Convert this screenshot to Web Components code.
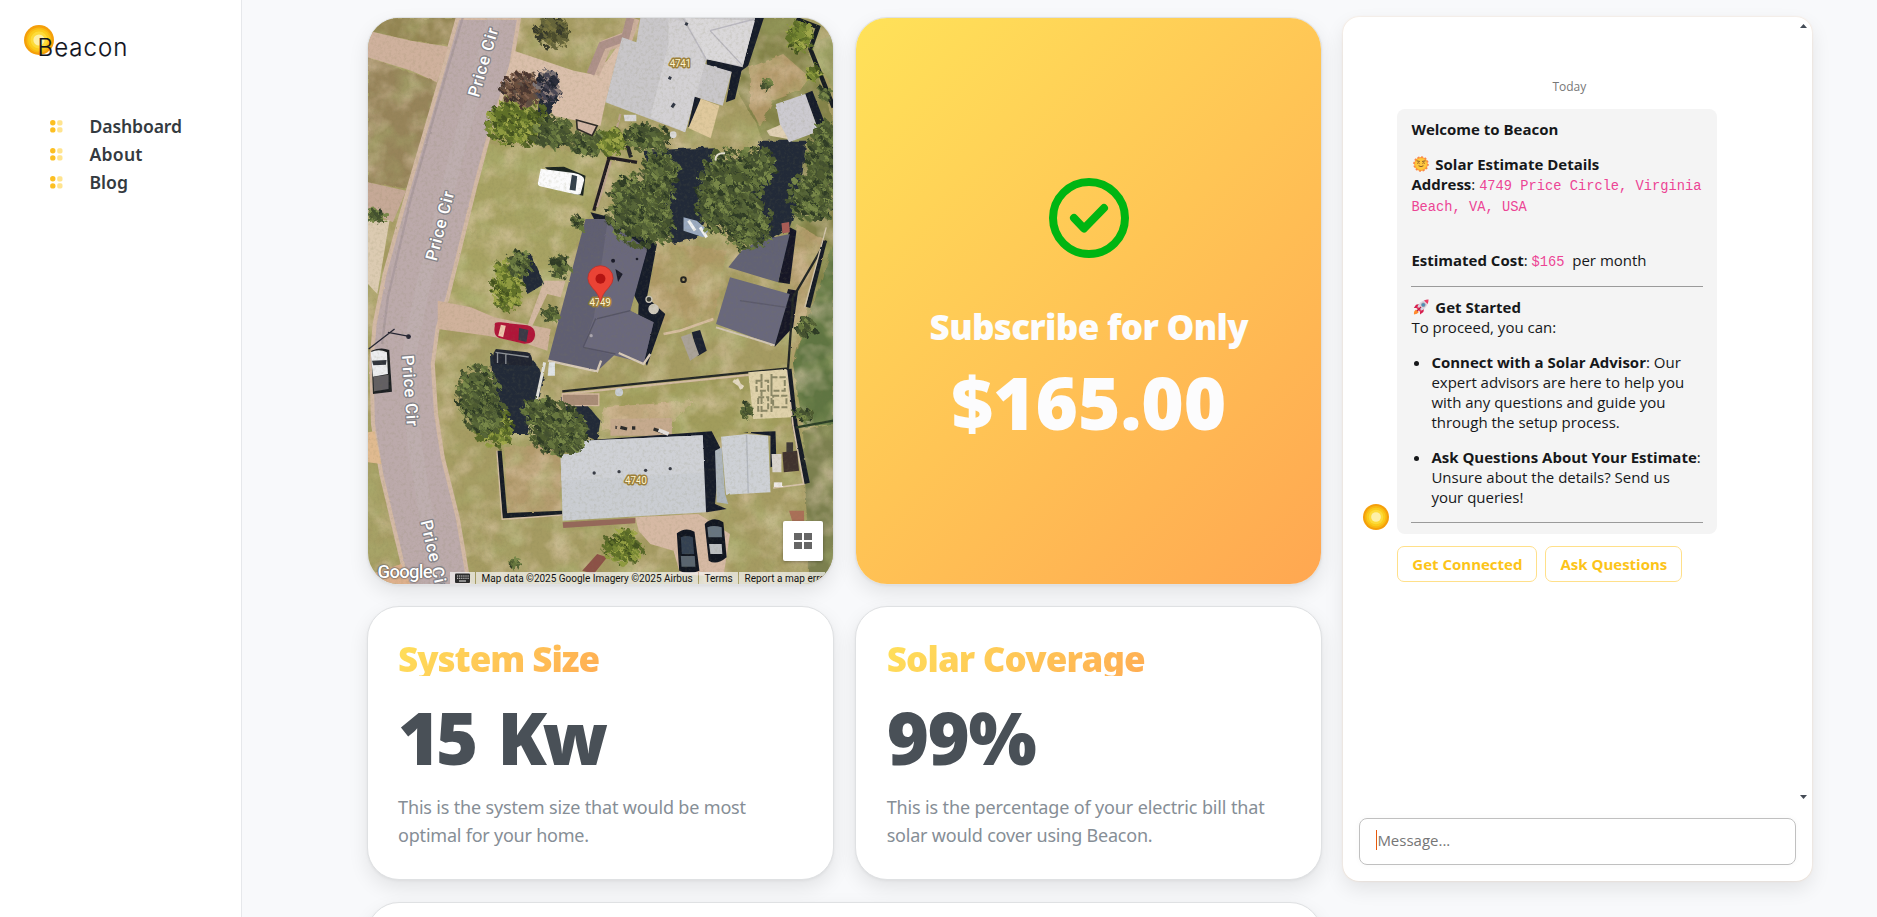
<!DOCTYPE html>
<html lang="en">
<head>
<meta charset="utf-8">
<title>Beacon</title>
<style>
html,body{margin:0;height:100%;overflow:hidden}
body{background:#f8f9fb;font-family:"Open Sans","Noto Sans",sans-serif}
</style>
</head>
<body>
<beacon-app></beacon-app>
<script>
function define(name, html, setup){
  customElements.define(name, class extends HTMLElement{
    constructor(){
      super();
      const t=document.createElement('template');
      t.innerHTML=html;
      this.attachShadow({mode:'open'}).append(t.content.cloneNode(true));
    }
    connectedCallback(){ if(setup) setup(this,this.shadowRoot); }
  });
}

/* Text tracked so that it fills the given width */
define('tracked-text', `<style>:host{display:inline-block;white-space:nowrap}span{display:inline-block}</style><span><slot></slot></span>`,
(el,root)=>{
  const s=root.querySelector('span'), n=el.textContent.length;
  const w=s.getBoundingClientRect().width;
  el.style.letterSpacing=((+el.getAttribute('width')-w)/(n-1)).toFixed(3)+'px';
});

define('sun-disc', `<style>:host{display:block}svg{display:block;width:100%;height:100%}</style>
<svg viewBox="0 0 30 30"><circle cx="15" cy="15" r="15" fill="#f59f0a"/><circle cx="15" cy="15" r="12.6" fill="#f8b912"/><circle cx="15" cy="15" r="10.8" fill="#fbcb1c"/><circle cx="15" cy="15" r="8.4" fill="#fddb3a"/><circle cx="15" cy="15" r="5.6" fill="#fdf0a8"/></svg>`);

define('brand-logo', `<style>
:host{display:grid;width:106px;height:34px}
sun-disc{width:30px;height:30px;grid-area:1/1}
tracked-text{grid-area:1/1;margin:6.5px 0 -6px 13.5px;font:300 24px/32px Inter,sans-serif;color:#10131c;-webkit-text-stroke:.2px #10131c}
</style><sun-disc></sun-disc><tracked-text width="90">Beacon</tracked-text>`);

define('nav-item', `<style>
:host{display:flex;align-items:center;height:28px;color:#343a40;font:600 17.6px/28px "Noto Sans",sans-serif}
svg{width:13px;height:13px;margin-right:26.5px}
</style>
<svg viewBox="0 0 13 13"><circle cx="2.8" cy="2.8" r="2.7" fill="#fcbf22"/><circle cx="2.8" cy="9.9" r="2.7" fill="#fcbf22"/><rect x="7.2" y=".3" width="5.3" height="5.2" rx="1.7" fill="#ffe48f"/><rect x="7.2" y="7.3" width="5.3" height="5.2" rx="1.7" fill="#ffe48f"/></svg>
<slot></slot>`);

define('side-bar', `<style>
:host{display:block;box-sizing:border-box;width:242px;height:100%;background:#fff;border-right:1px solid #e6e8eb;padding:25px 0 0 24px}
nav{padding:53px 0 0 26px}
</style><brand-logo></brand-logo>
<nav><nav-item><tracked-text width="92.5">Dashboard</tracked-text></nav-item><nav-item><tracked-text width="53">About</tracked-text></nav-item><nav-item><tracked-text width="38.5">Blog</tracked-text></nav-item></nav>`);

define('dash-card', `<style>
:host{display:block;box-sizing:border-box;border:1px solid #dfe1e3;border-radius:32px;background:#fff;box-shadow:0 8px 20px rgba(0,0,0,.09),0 1px 3px rgba(0,0,0,.05);min-width:0;overflow:hidden}
</style><slot></slot>`);

define('stat-body', `<style>
:host{display:flex;flex-direction:column;align-items:flex-start;padding:33.5px 30.5px}
.t{font:900 35px/35px "Noto Sans",sans-serif;background:linear-gradient(135deg,#ffe05a,#ffad53);-webkit-background-clip:text;background-clip:text;color:transparent}
.v{margin-top:25px;font:900 72px/72px "Noto Sans",sans-serif;color:#495057}
.d{margin-top:20px;font:400 18px/28px "Noto Sans",sans-serif;color:#868e96;display:flex;flex-direction:column;align-items:flex-start}
::slotted(tracked-text){display:block}
</style><div class="t"><slot name="title"></slot></div><div class="v"><slot name="value"></slot></div><div class="d"><slot></slot></div>`);

define('subscribe-body', `<style>
:host{display:flex;flex-direction:column;align-items:center;height:100%;box-sizing:border-box;padding-top:159.5px;background:linear-gradient(135deg,#ffe259,#ffa751);color:#fcfcfd;font:900 35px/35px "Noto Sans",sans-serif}
svg{width:80px;height:80px}
.t{margin-top:51px}
.p{margin-top:22px;font-size:72.5px;line-height:72px}
</style>
<svg viewBox="0 0 80 80" fill="none" stroke="#00b512" stroke-width="8"><circle cx="40" cy="40" r="36"/><path d="M25 40l10 10.5 20-20.5" stroke-linecap="round" stroke-linejoin="round"/></svg>
<div class="t"><tracked-text width="319">Subscribe for Only</tracked-text></div>
<div class="p"><tracked-text width="275">$165.00</tracked-text></div>`);

/* Aerial view. One unit is a third of a pixel. */
define('aerial-map', `<style>
:host{display:grid;width:100%;height:568px;position:relative}
.scene{grid-area:1/1;width:100%;height:568px;display:block}
.btn{position:absolute;right:10px;bottom:25px;width:40px;height:40px;background:#fff;border-radius:2px;box-shadow:0 1px 3px rgba(0,0,0,.3);display:grid;place-items:center}
.g{position:absolute;left:10px;bottom:2px;font:500 18.5px/24px Roboto,sans-serif;color:#fff;text-shadow:0 0 2px #555,0 0 1px #555,0 0 2px #666}
.bar{position:absolute;left:82px;right:0;bottom:0;height:14px;display:flex;overflow:hidden;font:400 10px/14px Roboto,sans-serif;color:#111}
.bar>span{box-sizing:border-box;background:rgba(245,245,245,.72);padding:0 5.5px;margin-right:1px;white-space:nowrap;flex:none}
.bar svg{display:block;margin-top:1px}
</style>
<svg class="scene" viewBox="20 22 1402 1704" preserveAspectRatio="none">
<defs>
<filter id="grain" x="0" y="0" width="100%" height="100%"><feTurbulence type="fractalNoise" baseFrequency=".11" numOctaves="4" seed="4"/><feColorMatrix values="0 0 0 0 .2  0 0 0 0 .2  0 0 0 0 .08  1.6 0 0 0 -.72"/></filter>
<filter id="patch" x="0" y="0" width="100%" height="100%"><feTurbulence type="fractalNoise" baseFrequency=".014" numOctaves="3" seed="9"/><feColorMatrix values="0 0 0 0 .84  0 0 0 0 .67  0 0 0 0 .5  0 2.4 0 0 -1.02"/></filter>
<filter id="green" x="0" y="0" width="100%" height="100%"><feTurbulence type="fractalNoise" baseFrequency=".012" numOctaves="3" seed="31"/><feColorMatrix values="0 0 0 0 .42  0 0 0 0 .48  0 0 0 0 .18  0 2.2 0 0 -.95"/></filter>
<filter id="rough" x="-10%" y="-10%" width="120%" height="120%"><feTurbulence type="fractalNoise" baseFrequency=".05" numOctaves="2" seed="2" result="n"/><feDisplacementMap in="SourceGraphic" in2="n" scale="16"/></filter>
<filter id="leaf" x="-5%" y="-5%" width="110%" height="110%" color-interpolation-filters="sRGB"><feTurbulence type="fractalNoise" baseFrequency=".07" numOctaves="2" seed="6" result="n"/><feDisplacementMap in="SourceGraphic" in2="n" scale="24"/><feGaussianBlur stdDeviation="1.5"/></filter>
<filter id="edge"><feTurbulence type="fractalNoise" baseFrequency=".05" numOctaves="2" seed="5" result="n"/><feDisplacementMap in="SourceGraphic" in2="n" scale="5"/></filter>
</defs>
<rect x="20" y="22" width="1402" height="1704" fill="#a59b62"/>
<g filter="url(#rough)">
<path d="M20 140L230 215 140 535 20 515Z" fill="#97845a"/>
<path d="M20 22H290L262 105 150 90 20 60Z" fill="#948653"/>
<path d="M1180 22H1310L1422 330V870L1300 1060 1290 640 1190 340 1130 240Z" fill="#848348"/>
<path d="M1170 170L1270 130 1350 200 1320 240 1240 270 1200 350 1170 290Z" fill="#b09666"/>
<path d="M1350 100L1422 70V240Z" fill="#989a5f"/>
<path d="M1300 1060L1422 700V1240L1330 1250Z" fill="#5f7442"/>
<path d="M1330 1260L1422 1240V1726H1350Z" fill="#7c804f"/>
<path d="M380 400L740 430 690 610 620 770 560 850 380 900 260 860 350 520Z" fill="#a7a264"/>
<path d="M890 690L1100 720 1060 930 910 960 870 850Z" fill="#ae9965"/>
<path d="M620 1150L1270 1090 1290 1240 1050 1290 760 1240 700 1280Z" fill="#a19c5b"/>
<path d="M730 1190L1000 1170 930 1240 720 1260Z" fill="#c0a77e"/>
<path d="M430 1310L600 1290V1500L440 1510Z" fill="#b29a6c"/>
<path d="M1310 640L1400 690 1300 1060 1260 830Z" fill="#b09967"/>
</g>
<rect x="20" y="22" width="1402" height="1704" filter="url(#patch)" opacity=".5"/>
<rect x="20" y="22" width="1402" height="1704" filter="url(#green)" opacity=".5"/>
<g filter="url(#edge)">
<path d="M290 22H475L450 170 380 390 345 520 260 860 230 950 215 1060 225 1210 245 1340 290 1520 325 1726H140L110 1600 60 1390 35 1240 30 1060 40 940 70 790 140 540 225 250Z" fill="#bcaaab" stroke="#d3b9a5" stroke-width="12"/>
<path d="M305 22L235 260 150 560 80 860 62 1000" stroke="#a5969a" stroke-width="7" fill="none" opacity=".7"/>
<path d="M400 22L290 420 180 850 140 1050 160 1300 230 1726" stroke="#c4b7b7" stroke-width="42" fill="none" opacity=".35"/>
<path d="M20 60L150 90 262 108 228 215 150 180 20 140Z" fill="#cfb19d"/>
<path d="M20 515L135 540 95 635 20 600Z" fill="#c6a997"/><path d="M20 630L85 628 48 850 20 820Z" fill="#dccbb2"/>
<path d="M20 1265L40 1262 60 1360 20 1355Z" fill="#e0ba90"/><path d="M30 1690L120 1660 150 1726H50Z" fill="#deb08c"/>
<path d="M460 120L640 180 690 190 740 150 785 85 735 275 720 345 580 315 540 250 430 210Z" fill="#dabfab"/>
<path d="M820 22L800 80 735 105 700 190" stroke="#cdb09d" stroke-width="36" fill="none"/>
<path d="M810 22L795 80 725 105 690 190" stroke="#ae918a" stroke-width="24" fill="none"/>
<path d="M230 870L330 890 400 920 520 945 570 955 560 1020 500 1000 380 975 230 955Z" fill="#d0b29c"/>
<path d="M550 810L615 810 600 860 560 850 515 945H500Z" fill="#d3b8a2"/>
<path d="M825 1520L1015 1510 1110 1570 1090 1700 960 1690 940 1620 870 1600 835 1560Z" fill="#d6b9a4"/>
<path d="M665 1680L710 1630 740 1640 700 1690Z" fill="#8c5146"/>
<path d="M1288 1500H1333V1545L1300 1540Z" fill="#aa6f58"/>
<path d="M750 1225L935 1222V1275H750Z" fill="#c6aa8e"/>
</g>
<g filter="url(#rough)" fill="#232b38">
<path d="M540 190L600 240 570 300 560 370 530 330Z"/>
<path d="M390 1030L520 1050 550 1100 530 1170 500 1270 440 1270 400 1200Z"/>
<path d="M600 1160L660 1160 720 1230 710 1290 640 1260Z"/>
<path d="M850 420L1060 410 1060 560 1010 680 940 700 880 560Z"/>
<path d="M1200 390L1340 390 1320 560 1290 650 1190 720 1150 640Z"/>
<path d="M460 730L510 730 550 820 500 850Z"/>
<path d="M770 1580L810 1620 795 1640 770 1600Z"/>
</g>
<g filter="url(#edge)">
<path d="M1185 22H1212L1165 165 1145 180 1125 265 1098 275 1115 185 1040 162V142L1148 168Z" fill="#171c2c"/>
<path d="M840 22H1185L1148 170 1040 146 1035 160 1115 183 1088 285 1004 258 975 365 735 275 785 80 828 95Z" fill="#c9c7ca"/>
<path d="M925 22L1000 40 1035 160 975 365 870 318 925 100Z" fill="#d3d1d4"/><path d="M975 22L1185 30 1148 165 1040 146Z" fill="#dad8da"/>
<path d="M970 25L1038 145M1050 60L1185 25M1050 60L1148 165" stroke="#b9b7bf" stroke-width="4" fill="none"/>
<path d="M1004 258L1022 264 1000 354 984 348Z" fill="#151a2a"/><path d="M1022 264L1078 285 1052 383 985 352Z" fill="#e0c99d"/>
<path d="M975 38l8 4M925 200l8 4M935 290l8-12" stroke="#333844" stroke-width="9"/>
<path d="M1335 250L1358 240 1395 335 1375 355Z" fill="#171c2c"/><path d="M1248 280L1337 250 1377 362 1288 395 1262 350Z" fill="#cccad0"/><path d="M1220 360L1262 342 1285 385 1230 375Z" fill="#e0d0b4"/>
<path d="M1310 25L1375 50 1352 115 1422 290" stroke="#141c24" stroke-width="13" fill="none"/>
<path d="M740 440L830 455M745 445L700 600" stroke="#221f22" stroke-width="10" fill="none"/><path d="M752 452L710 590M780 310L765 370" stroke="#bda390" stroke-width="6"/>
<path d="M790 370L812 440" stroke="#252829" stroke-width="12"/>
<path d="M690 605L750 620 890 700 860 860 915 910 860 1065 830 1010 835 880Z" fill="#151a2a"/>
<path d="M675 625L735 625 860 715 808 900 880 935 850 1060 775 1025 765 1030 710 1082 562 1050Z" fill="#615f72"/>
<path d="M740 640L860 720 810 900 880 935 850 1058 668 1010 700 920Z" fill="#6a687b"/><path d="M668 1010L705 925 810 900M765 1030L668 1010" fill="none" stroke="#545365" stroke-width="4"/>
<path d="M562 1050L710 1082 722 1050M775 1027L850 1060 870 1030" fill="none" stroke="#d8cab7" stroke-width="7"/>
<circle cx="758" cy="750" r="6" fill="#1c1d2a"/><circle cx="830" cy="745" r="4" fill="#1c1d2a"/><path d="M765 775l22 15-14 24z" fill="#1c1d2a"/><circle cx="692" cy="975" r="5" fill="#aaa5ae"/>
<path d="M1290 650L1310 660 1290 820 1255 815Z" fill="#141927"/><path d="M1145 720L1195 690 1290 670 1255 815 1105 770Z" fill="#626274"/>
<path d="M1285 835L1315 840 1300 950 1245 1008 1240 1000Z" fill="#141927"/><path d="M1110 800L1290 850 1245 1004 1068 940Z" fill="#69687b"/><path d="M1140 870L1280 890" stroke="#5b5a6c" stroke-width="4"/><path d="M1068 950L1245 1004" stroke="#d2c6b3" stroke-width="6"/>
<path d="M1265 638L1288 634 1290 665 1268 668Z" fill="#a85b57"/><path d="M970 620L1010 630 1045 660 1030 680 970 660Z" fill="#9baac0"/><path d="M985 630l20 30m15-10l20 30" stroke="#f1f2f2" stroke-width="9"/>
<path d="M995 965L1020 958 1040 1020 1012 1037Z" fill="#1d2232"/><path d="M962 978L993 968 1017 1032 990 1050Z" fill="#aaa298"/>
<path d="M605 1142L1285 1073 1300 860 1400 690" stroke="#242726" stroke-width="7" fill="none"/><path d="M605 1151L1280 1081" stroke="#d4bca2" stroke-width="6"/>
<path d="M1287 1075L1305 1240 1342 1418" stroke="#171c28" stroke-width="17" fill="none"/><path d="M1280 1078L1300 1245 1332 1420 1240 1432" stroke="#d6c3ab" stroke-width="5" fill="none"/>
<path d="M1395 690L1345 890" stroke="#181d25" stroke-width="14"/><path d="M1400 650L1335 890" stroke="#d2c5ad" stroke-width="4"/><path d="M1310 1250L1422 1230" stroke="#293e25" stroke-width="7"/>
<path d="M605 1150H715V1185H605Z" fill="#a98c77" stroke="#d4b8a0" stroke-width="4"/><path d="M910 970L960 960 1060 925" stroke="#d6bd9f" stroke-width="8" fill="none"/>
<path d="M415 1320L432 1515 605 1508" stroke="#191d25" stroke-width="15" fill="none"/><path d="M408 1320L424 1526 605 1513" stroke="#d3bea4" stroke-width="4" fill="none"/>
<path d="M1165 1085L1280 1075 1295 1220 1180 1225 1170 1130Z" fill="#e0d2ab"/><path d="M1190 1110h35v30h-35zM1235 1100h40v40h-40zM1195 1160h30v40h-30zM1240 1155h40v35h-40zM1205 1090v130M1235 1090v120" fill="none" stroke="#8b8766" stroke-width="6" stroke-dasharray="18 6"/>
<path d="M1120 1110l30 20M1130 1105l15 30" stroke="#e3d8c0" stroke-width="10"/>
<path d="M660 1290L1055 1262 1080 1310 1065 1480 1100 1495 1040 1505Z" fill="#171b2a"/>
<path d="M600 1330L640 1330 670 1290 1028 1274 1038 1505 606 1530Z" fill="#cacdd2"/><path d="M602 1410L1032 1386 1028 1274 670 1290 640 1330 600 1330Z" fill="#cfd1d6"/>
<g fill="#373b44"><circle cx="701" cy="1387" r="5"/><circle cx="776" cy="1383" r="5"/><circle cx="856" cy="1379" r="5"/><circle cx="930" cy="1374" r="5"/></g>
<path d="M606 1535L825 1522V1538L608 1552Z" fill="#95685a"/>
<path d="M1150 1265L1247 1262 1250 1365 1232 1370V1275Z" fill="#171c2b"/><path d="M1083 1278L1160 1270 1225 1275 1232 1445 1098 1452Z" fill="#ced1d6"/><path d="M1160 1272L1165 1448" stroke="#b3b7be" stroke-width="4"/>
<path d="M1065 1320L1085 1310 1095 1450 1105 1480 1070 1475Z" fill="#aeb6bd"/><path d="M1235 1330H1265V1385H1238Z" fill="#dad4ce"/><path d="M1268 1325L1312 1320 1318 1380 1272 1385Z" fill="#41322f"/><path d="M1280 1295h20v30h-20z" fill="#3c3736"/><path d="M1242 1415h25v14h-25z" fill="#eee9e5"/>
<path d="M552 1055L528 1165" stroke="#e1e0da" stroke-width="9"/><path d="M565 1055h18v40h-22z" fill="#dfe3e6"/>
<path d="M780 1250l20 5M765 1250h4M815 1252h10M880 1255l30 10" stroke="#2b2b2b" stroke-width="10"/><path d="M895 1258l30 12" stroke="#e4dfdc" stroke-width="12"/>
<path d="M22 1015L100 955M80 965L148 978" stroke="#252633" stroke-width="4"/><circle cx="142" cy="978" r="7" fill="#252633"/>
</g>
<g id="trees" filter="url(#leaf)"></g>
<g>
<path d="M648 328L710 345 695 375 650 355Z" fill="#d2b6a5" stroke="#2d2a27" stroke-width="5"/>
<path d="M553 470L610 468 675 495 668 555 630 548Z" fill="#1b2420"/><path d="M540 474L640 487Q672 494 671 508L660 550Q655 555 630 548L538 527Q530 524 532 515Z" fill="#fbfbfc"/><path d="M634 492L650 497 645 540 627 537Z" fill="#33404c"/>
<path d="M402 945Q398 932 420 935L500 944Q525 950 523 975 520 1000 490 999L415 982Q396 975 402 945Z" fill="#b01539"/><path d="M420 942l15 3-8 35-15-5z" fill="#eec4ac"/><path d="M475 952l28 6-6 36-24-6z" fill="#3b3947"/>
<path d="M405 1015L500 1025Q518 1030 513 1066L400 1060Q392 1030 405 1015Z" fill="#202431"/><path d="M404 1025l100 14M410 1025v32M435 1030v30" stroke="#8e9298" stroke-width="4"/>
<path d="M30 1020Q60 1008 84 1018L92 1143 35 1150Z" fill="#1d2023"/><path d="M28 1025Q52 1012 77 1025L80 1090 35 1098Z" fill="#ecedf0"/><path d="M32 1050L76 1048 74 1062 36 1064Z" fill="#30343c"/><path d="M36 1098L82 1092V1135L38 1142Z" fill="#625f63"/>
<path d="M950 1568Q975 1548 1003 1563L1018 1680Q985 1693 957 1680Z" fill="#111621"/><path d="M962 1580Q980 1572 998 1580L1002 1630H965Z" fill="#344152"/><path d="M962 1636h42l2 32h-42z" fill="#59646f"/>
<path d="M1034 1540Q1060 1515 1090 1535L1100 1640Q1070 1665 1046 1650Z" fill="#111621"/><path d="M1042 1550Q1060 1542 1085 1550L1086 1580H1045Z" fill="#687581"/><path d="M1047 1600h38l2 30h-36z" fill="#bbbec2"/>
<path d="M1067 450Q1065 425 1095 428" fill="none" stroke="#e5dfd1" stroke-width="6"/><g fill="#3a3d38" stroke="#cfc9bc" stroke-width="4"><circle cx="880" cy="895" r="14" fill="#cfc9bc"/><circle cx="866" cy="866" r="9"/></g><circle cx="970" cy="807" r="7" fill="none" stroke="#242321" stroke-width="6"/><circle cx="776" cy="1145" r="12" fill="#c9ced4"/><circle cx="939" cy="372" r="10" fill="#dad9d8"/><path d="M790 312h38v20h-35z" fill="#d9d7da"/>
</g>
<rect x="20" y="22" width="1402" height="1704" filter="url(#grain)" opacity=".22"/>
<g font-family="Roboto,sans-serif" font-weight="500" font-size="50" fill="#fff" stroke="#858388" stroke-width="8" paint-order="stroke" text-anchor="middle" stroke-linejoin="round">
<text transform="translate(383 160) rotate(-74)" textLength="213">Price Cir</text>
<text transform="translate(253 650) rotate(-75.5)" textLength="213">Price Cir</text>
<text transform="translate(130 1141) rotate(86)" textLength="213">Price Cir</text>
<text transform="translate(202 1636) rotate(77)" textLength="213">Price Cir</text>
</g>
<g font-family="Roboto,sans-serif" font-size="30" fill="#fff4cf" stroke="#9c803a" stroke-width="9" paint-order="stroke" stroke-linejoin="round" text-anchor="middle">
<text x="961" y="170" textLength="64">4741</text><text x="719" y="886" textLength="64">4749</text><text x="827" y="1421" textLength="66">4740</text></g>
<path d="M720 875Q715 850 696 832 682 817 682 803A38 38 0 0 1 758 803Q758 817 744 832 725 850 720 875Z" fill="#ea4335" stroke="#b9322b" stroke-width="2.5"/><circle cx="720" cy="804" r="15" fill="#b31412"/>
</svg>
<div class="g"><tracked-text width="55">Google</tracked-text></div>
<div class="bar"><span style="width:25.5px;padding:0 5px"><svg width="16" height="11" viewBox="0 0 16 11"><rect y=".5" width="15" height="9.5" rx="1" fill="#2c2c2c"/><path d="M2 3h12M2 5.2h12" stroke="#eee" stroke-width="1.1" stroke-dasharray="1.2 .9"/><path d="M4 8h7" stroke="#eee"/></svg></span><span style="width:222px"><tracked-text width="211">Map data ©2025 Google Imagery ©2025 Airbus</tracked-text></span><span style="width:39px"><tracked-text width="28">Terms</tracked-text></span><span style="width:86px;padding-right:0;overflow:hidden"><tracked-text width="84">Report a map error</tracked-text></span></div>
<div class="btn"><svg width="18" height="16" fill="#666"><path d="M0 0h8v7H0zM10 0h8v7h-8zM0 9h8v7H0zM10 9h8v7h-8z"/></svg></div>`,
(el,root)=>{
  let seed=17;
  const rnd=()=>(seed=(seed*16807)%2147483647)/2147483647;
  const green=['#2e3b25','#43502f','#566538','#66763e','#788849','#4d5b30'];
  const lime=['#43521f','#5f7028','#778833','#8f9b40','#a0a84a','#566628'];
  const rust=['#4a3630','#6a4e3e','#856453','#97785f','#5f4e44','#3b302d'];
  const slate=['#2b2d3b','#484654','#7c7477','#1f2431','#8e7f7c'];
  const crowns=[[470,335,90,70,lime],[490,235,65,50,rust],[565,230,34,48,slate],[580,370,60,45,green],[690,395,62,38,green],[760,395,42,38,lime],
   [860,380,65,40,green],[900,470,50,50,green],[835,600,90,105,green],[900,520,45,65,green],[900,640,40,55,green],[1110,520,95,95,green],[1190,470,55,60,green],[1060,590,50,70,green],[1160,640,75,75,green],[1390,440,45,90,green],[1360,560,70,70,green],[1400,370,35,40,green],
   [1318,80,42,45,lime],[1362,185,20,25,lime],[1395,250,18,22,green],[575,60,50,50,['#4a4b2c','#65643a','#77733f','#37392a']],[440,825,45,75,lime],[480,760,35,38,green],[600,765,32,32,green],[655,635,22,18,green],
   [350,1150,60,80,green],[400,1250,55,55,lime],[370,1210,60,60,green],[590,1255,80,75,green],[540,1200,50,40,green],[640,1280,40,40,green],[790,1610,55,48,lime],[462,1660,14,15,green],[1340,950,28,28,green],[1330,1210,28,20,green],[1160,1200,16,26,green],[45,615,30,18,green],[570,910,22,22,green],[430,870,28,14,lime],[1215,220,16,14,green]];
  let out='';
  for(const [cx,cy,rx,ry,pal] of crowns){
    out+='<ellipse cx="'+cx+'" cy="'+cy+'" rx="'+rx*.8+'" ry="'+ry*.8+'" fill="'+pal[1]+'"/>';
    const n=Math.round(rx*ry/20);
    for(let i=0;i<n;i++){
      const a=rnd()*6.283, r=Math.pow(rnd(),.55)*1.08;
      out+='<circle cx="'+(cx+Math.cos(a)*r*rx).toFixed(0)+'" cy="'+(cy+Math.sin(a)*r*ry).toFixed(0)+'" r="'+(3+rnd()*6).toFixed(1)+'" fill="'+pal[Math.floor(rnd()*pal.length)]+'"/>';
    }
  }
  root.getElementById('trees').innerHTML=out;
});

define('icon-sun', `<style>:host{display:inline-block;width:20px;height:16px;vertical-align:-2px}svg{display:block;margin-left:2px}</style><svg width="16" height="16" viewBox="0 0 16 16"><circle cx="8" cy="8" r="6.9" fill="#ffb02e" stroke="#f9864c" stroke-width="1.8" stroke-dasharray="1.9 1.7"/><circle cx="8" cy="8" r="5.8" fill="#ffc83d"/><path d="M3.9 4.9l2.6.5M12.1 4.9l-2.6.5M4.5 7.1q.9-.9 1.8 0M9.7 7.1q.9-.9 1.8 0M5.9 10q2.1 1.5 4.2 0" fill="none" stroke="#7b4c2a" stroke-width=".9" stroke-linecap="round"/></svg>`);
define('icon-rocket', `<style>:host{display:inline-block;width:20px;height:16px;vertical-align:-2px}svg{display:block;margin-left:2px}</style><svg width="16" height="16" viewBox="0 0 16 16"><path d="M1 15.5Q.5 12 3 10.5L5.8 13Q4.5 15 1 15.5Z" fill="#ff8a2e"/><path d="M6 5L3 5.7.8 9 5 9ZM11 10L10.4 13 7 15.4 7 11Z" fill="#d5204f"/><path d="M15.5.5Q9.5.5 5.5 5.6L3.6 9.5 6.7 12.4 10.5 10.4Q15.5 6.5 15.5.5Z" fill="#d9d4df"/><path d="M15.5.5Q13.2.5 11 1.4L14.6 5Q15.5 3 15.5.5ZM3.6 9.5L4.5 7.5 8.6 11.5 6.7 12.4Z" fill="#ee3a63"/><circle cx="10.3" cy="5.8" r="1.9" fill="#4a90b8" stroke="#8b8796" stroke-width=".6"/><path d="M4 12L8 8" stroke="#b81c45" stroke-width="1.2"/></svg>`);

define('chat-message', `<style>
:host{display:block;box-sizing:border-box;width:320px;height:425px;border-radius:8px;background:#f4f4f4;padding:10px 14px;color:#16181a;font:400 15px/20px "Open Sans",sans-serif}
p,ul{margin:0}b{font-weight:700}
code{font:13.73px/1 "Liberation Mono",monospace;color:#ec4494}
hr{border:0;border-top:1px solid #9a9a9a;margin:0}
ul{padding-left:20px;list-style:disc}
div{white-space:nowrap;height:20px}
p{height:20px}
</style>
<p><b>Welcome to Beacon</b></p>
<p style="margin-top:15px"><icon-sun></icon-sun> <b>Solar Estimate Details</b></p>
<div><b>Address</b>: <code>4749 Price Circle, Virginia</code></div>
<div style="margin-top:1px"><code>Beach, VA, USA</code></div>
<div style="margin-top:35px"><b>Estimated Cost</b>: <code>$165</code>&nbsp; per month</div>
<hr style="margin-top:16px">
<p style="margin-top:10px"><icon-rocket></icon-rocket> <b>Get Started</b></p>
<p>To proceed, you can:</p>
<ul style="margin-top:15px"><li><b>Connect with a Solar Advisor</b>: Our<br>expert advisors are here to help you<br>with any questions and guide you<br>through the setup process.</li>
<li style="margin-top:15px;white-space:nowrap"><b>Ask Questions About Your Estimate</b>:<br>Unsure about the details? Send us<br>your queries!</li></ul>
<hr style="margin-top:15px">`);

define('reply-button', `<style>:host{display:flex;justify-content:center;align-items:center;box-sizing:border-box;height:36px;border:1px solid #ffe08a;border-radius:7px;background:#fff;color:#fcc419;font:700 15px/20px "Open Sans",sans-serif}</style><slot></slot>`);

define('chat-panel', `<style>
:host{display:flex;flex-direction:column;box-sizing:border-box;height:864px;border-radius:16px;overflow:hidden;background:#fff;box-shadow:0 8px 20px rgba(0,0,0,.09),0 0 2px rgba(255,170,80,.3)}
.scroll{flex:1;display:flex;min-height:0}
.msgs{flex:1;padding-left:16px}
.day{margin:62px 0 0 -16px;text-align:center;font-size:12px;line-height:16px;color:#777}
.row{display:flex;align-items:flex-end;gap:8px;margin:14px 0 0 4px}
.row sun-disc{width:26px;height:26px;margin-bottom:4px}
.row chat-message{flex:none}
.replies{display:flex;gap:8px;margin:12px 0 0 38px}
.track{width:17px;display:flex;flex-direction:column;justify-content:space-between;align-items:center;padding:7px 0 2px}
.input{margin:17px 16px 16px;box-sizing:border-box;height:47px;border:1px solid #c0c0c0;border-radius:8px;box-shadow:0 0 6px rgba(0,0,0,.035);display:flex;align-items:center;padding:0 0 3px 16px;font-size:15px;color:#767676}
.caret{width:1px;height:20px;background:#e8590c}
</style>
<div class="scroll"><div class="msgs"><div class="day">Today</div>
<div class="row"><sun-disc></sun-disc><chat-message></chat-message></div>
<div class="replies"><reply-button style="width:140px">Get Connected</reply-button><reply-button style="width:137px">Ask Questions</reply-button></div></div>
<div class="track"><svg width="7" height="4" fill="#444b55"><path d="M3.5 0L7 4H0z"/></svg><svg width="7" height="4" fill="#444b55"><path d="M3.5 4L7 0H0z"/></svg></div></div>
<div class="input"><span class="caret"></span>Message...</div>`);

define('beacon-app', `<style>
:host{display:flex;height:917px;overflow:hidden}
side-bar{flex:none}
main{flex:1;display:grid;grid-template-columns:467.6px 467.2px 469px;grid-template-rows:568px 274px 274px;gap:21.4px 21px;padding:17px 0 0 124.6px}
chat-panel{grid-area:1/3/3/4}
.wide{grid-column:1/3}
</style>
<side-bar></side-bar>
<main>
<dash-card><aerial-map></aerial-map></dash-card>
<dash-card><subscribe-body></subscribe-body></dash-card>
<chat-panel></chat-panel>
<dash-card><stat-body><tracked-text slot="title" width="202">System Size</tracked-text><tracked-text slot="value" width="210" style="word-spacing:9px">15 Kw</tracked-text><tracked-text width="348">This is the system size that would be most</tracked-text><tracked-text width="191">optimal for your home.</tracked-text></stat-body></dash-card>
<dash-card><stat-body><tracked-text slot="title" width="259">Solar Coverage</tracked-text><tracked-text slot="value" width="150">99%</tracked-text><tracked-text width="378">This is the percentage of your electric bill that</tracked-text><tracked-text width="266">solar would cover using Beacon.</tracked-text></stat-body></dash-card>
<dash-card class="wide"></dash-card>
</main>`);
</script>
</body>
</html>
